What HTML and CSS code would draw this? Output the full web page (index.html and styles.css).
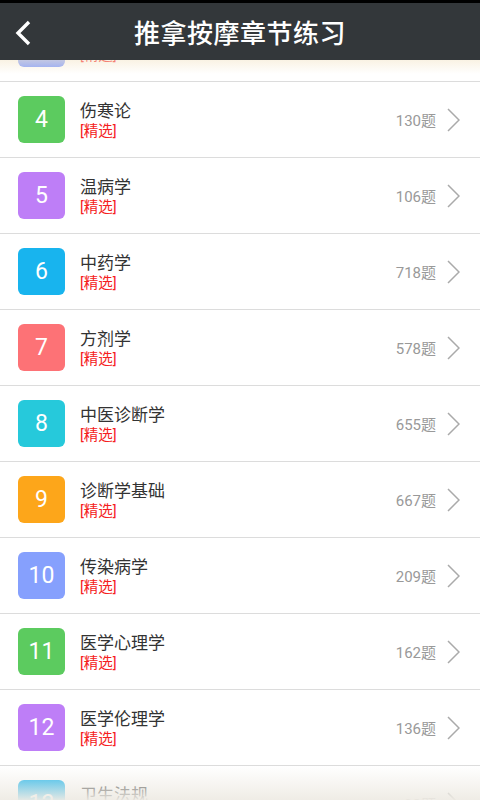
FILE: index.html
```html
<!DOCTYPE html>
<html lang="zh-CN">
<head>
    <meta charset="UTF-8">
    <title>推拿按摩章节练习</title>
    <link rel="stylesheet" href="styles.css">
</head>
<body>
    <div class="status"></div>
    <div class="header">
        <span class="back">
            <svg width="20" height="28" viewBox="0 0 20 28"><polyline points="16,3 5,14 16,25" fill="none" stroke="#fff" stroke-width="3.4"/></svg>
        </span>
        <h1>推拿按摩章节练习</h1>
    </div>
    <div class="list">
        <ul class="rows">
            <li><span class="num c7">3</span><div class="info"><div class="name">中医基础理论</div><div class="tag">[精选]</div></div><span class="count">120题</span><span class="arrow"></span></li>
            <li><span class="num c1">4</span><div class="info"><div class="name">伤寒论</div><div class="tag">[精选]</div></div><span class="count">130题</span><span class="arrow"></span></li>
            <li><span class="num c2">5</span><div class="info"><div class="name">温病学</div><div class="tag">[精选]</div></div><span class="count">106题</span><span class="arrow"></span></li>
            <li><span class="num c3">6</span><div class="info"><div class="name">中药学</div><div class="tag">[精选]</div></div><span class="count">718题</span><span class="arrow"></span></li>
            <li><span class="num c4">7</span><div class="info"><div class="name">方剂学</div><div class="tag">[精选]</div></div><span class="count">578题</span><span class="arrow"></span></li>
            <li><span class="num c5">8</span><div class="info"><div class="name">中医诊断学</div><div class="tag">[精选]</div></div><span class="count">655题</span><span class="arrow"></span></li>
            <li><span class="num c6">9</span><div class="info"><div class="name">诊断学基础</div><div class="tag">[精选]</div></div><span class="count">667题</span><span class="arrow"></span></li>
            <li><span class="num c7">10</span><div class="info"><div class="name">传染病学</div><div class="tag">[精选]</div></div><span class="count">209题</span><span class="arrow"></span></li>
            <li><span class="num c1">11</span><div class="info"><div class="name">医学心理学</div><div class="tag">[精选]</div></div><span class="count">162题</span><span class="arrow"></span></li>
            <li><span class="num c2">12</span><div class="info"><div class="name">医学伦理学</div><div class="tag">[精选]</div></div><span class="count">136题</span><span class="arrow"></span></li>
            <li><span class="num c3">13</span><div class="info"><div class="name">卫生法规</div><div class="tag">[精选]</div></div><span class="count">98题</span><span class="arrow"></span></li>
        </ul>
    </div>
</body>
</html>
```

FILE: styles.css
```css
body {
    margin: 0;
    width: 480px;
    height: 800px;
    overflow: hidden;
    background-color: #fff;
    font-family: Roboto, "Noto Sans CJK SC", sans-serif;
}

.status {
    height: 3px;
    background-color: #000;
}

.header {
    height: 57px;
    background-color: #33373a;
    display: flex;
    align-items: center;
    justify-content: center;
    position: relative;
    z-index: 2;
}

.header h1 {
    margin: 0;
    color: #fff;
    font-size: 26px;
    font-weight: 500;
    letter-spacing: 0.5px;
}

.back {
    position: absolute;
    left: 13px;
    top: 16px;
}

.list {
    height: 740px;
    overflow: hidden;
    position: relative;
}

.list::before,
.list::after {
    content: "";
    position: absolute;
    left: 0;
    right: 0;
    z-index: 1;
}

.list::before {
    top: 0;
    height: 14px;
    background: linear-gradient(rgba(245, 232, 205, 0.55), rgba(255, 255, 255, 0));
}

.list::after {
    bottom: 0;
    height: 34px;
    background: linear-gradient(rgba(238, 235, 228, 0), rgba(238, 235, 228, 0.95));
}

.rows {
    list-style: none;
    margin: -54px 0 0 0;
    padding: 0;
}

.rows li {
    height: 75px;
    border-bottom: 1px solid #dcdcdc;
    display: flex;
    align-items: center;
    padding: 0 20px 0 18px;
}

.num {
    width: 47px;
    height: 47px;
    border-radius: 6px;
    color: #fff;
    font-size: 23px;
    display: flex;
    align-items: center;
    justify-content: center;
    flex-shrink: 0;
}

.c1 { background-color: #5ccb5f; }
.c2 { background-color: #be7ef7; }
.c3 { background-color: #18b4ee; }
.c4 { background-color: #fd7276; }
.c5 { background-color: #26c9db; }
.c6 { background-color: #fda61a; }
.c7 { background-color: #86a0fd; }

.info {
    flex: 1;
    margin-left: 15px;
    padding-top: 1px;
}

.name {
    color: #333;
    font-size: 17px;
    line-height: 22px;
}

.tag {
    color: #f52020;
    font-size: 14.5px;
    line-height: 18px;
    margin-top: 1px;
}

.count {
    color: #999;
    font-size: 15px;
    margin-right: 11px;
}

.arrow {
    width: 13px;
    height: 24px;
    background: url("data:image/svg+xml;utf8,<svg xmlns='http://www.w3.org/2000/svg' width='13' height='24' viewBox='0 0 13 24'><polyline points='1,1 12,12 1,23' fill='none' stroke='%23aaa' stroke-width='1.5'/></svg>") no-repeat;
}
```
